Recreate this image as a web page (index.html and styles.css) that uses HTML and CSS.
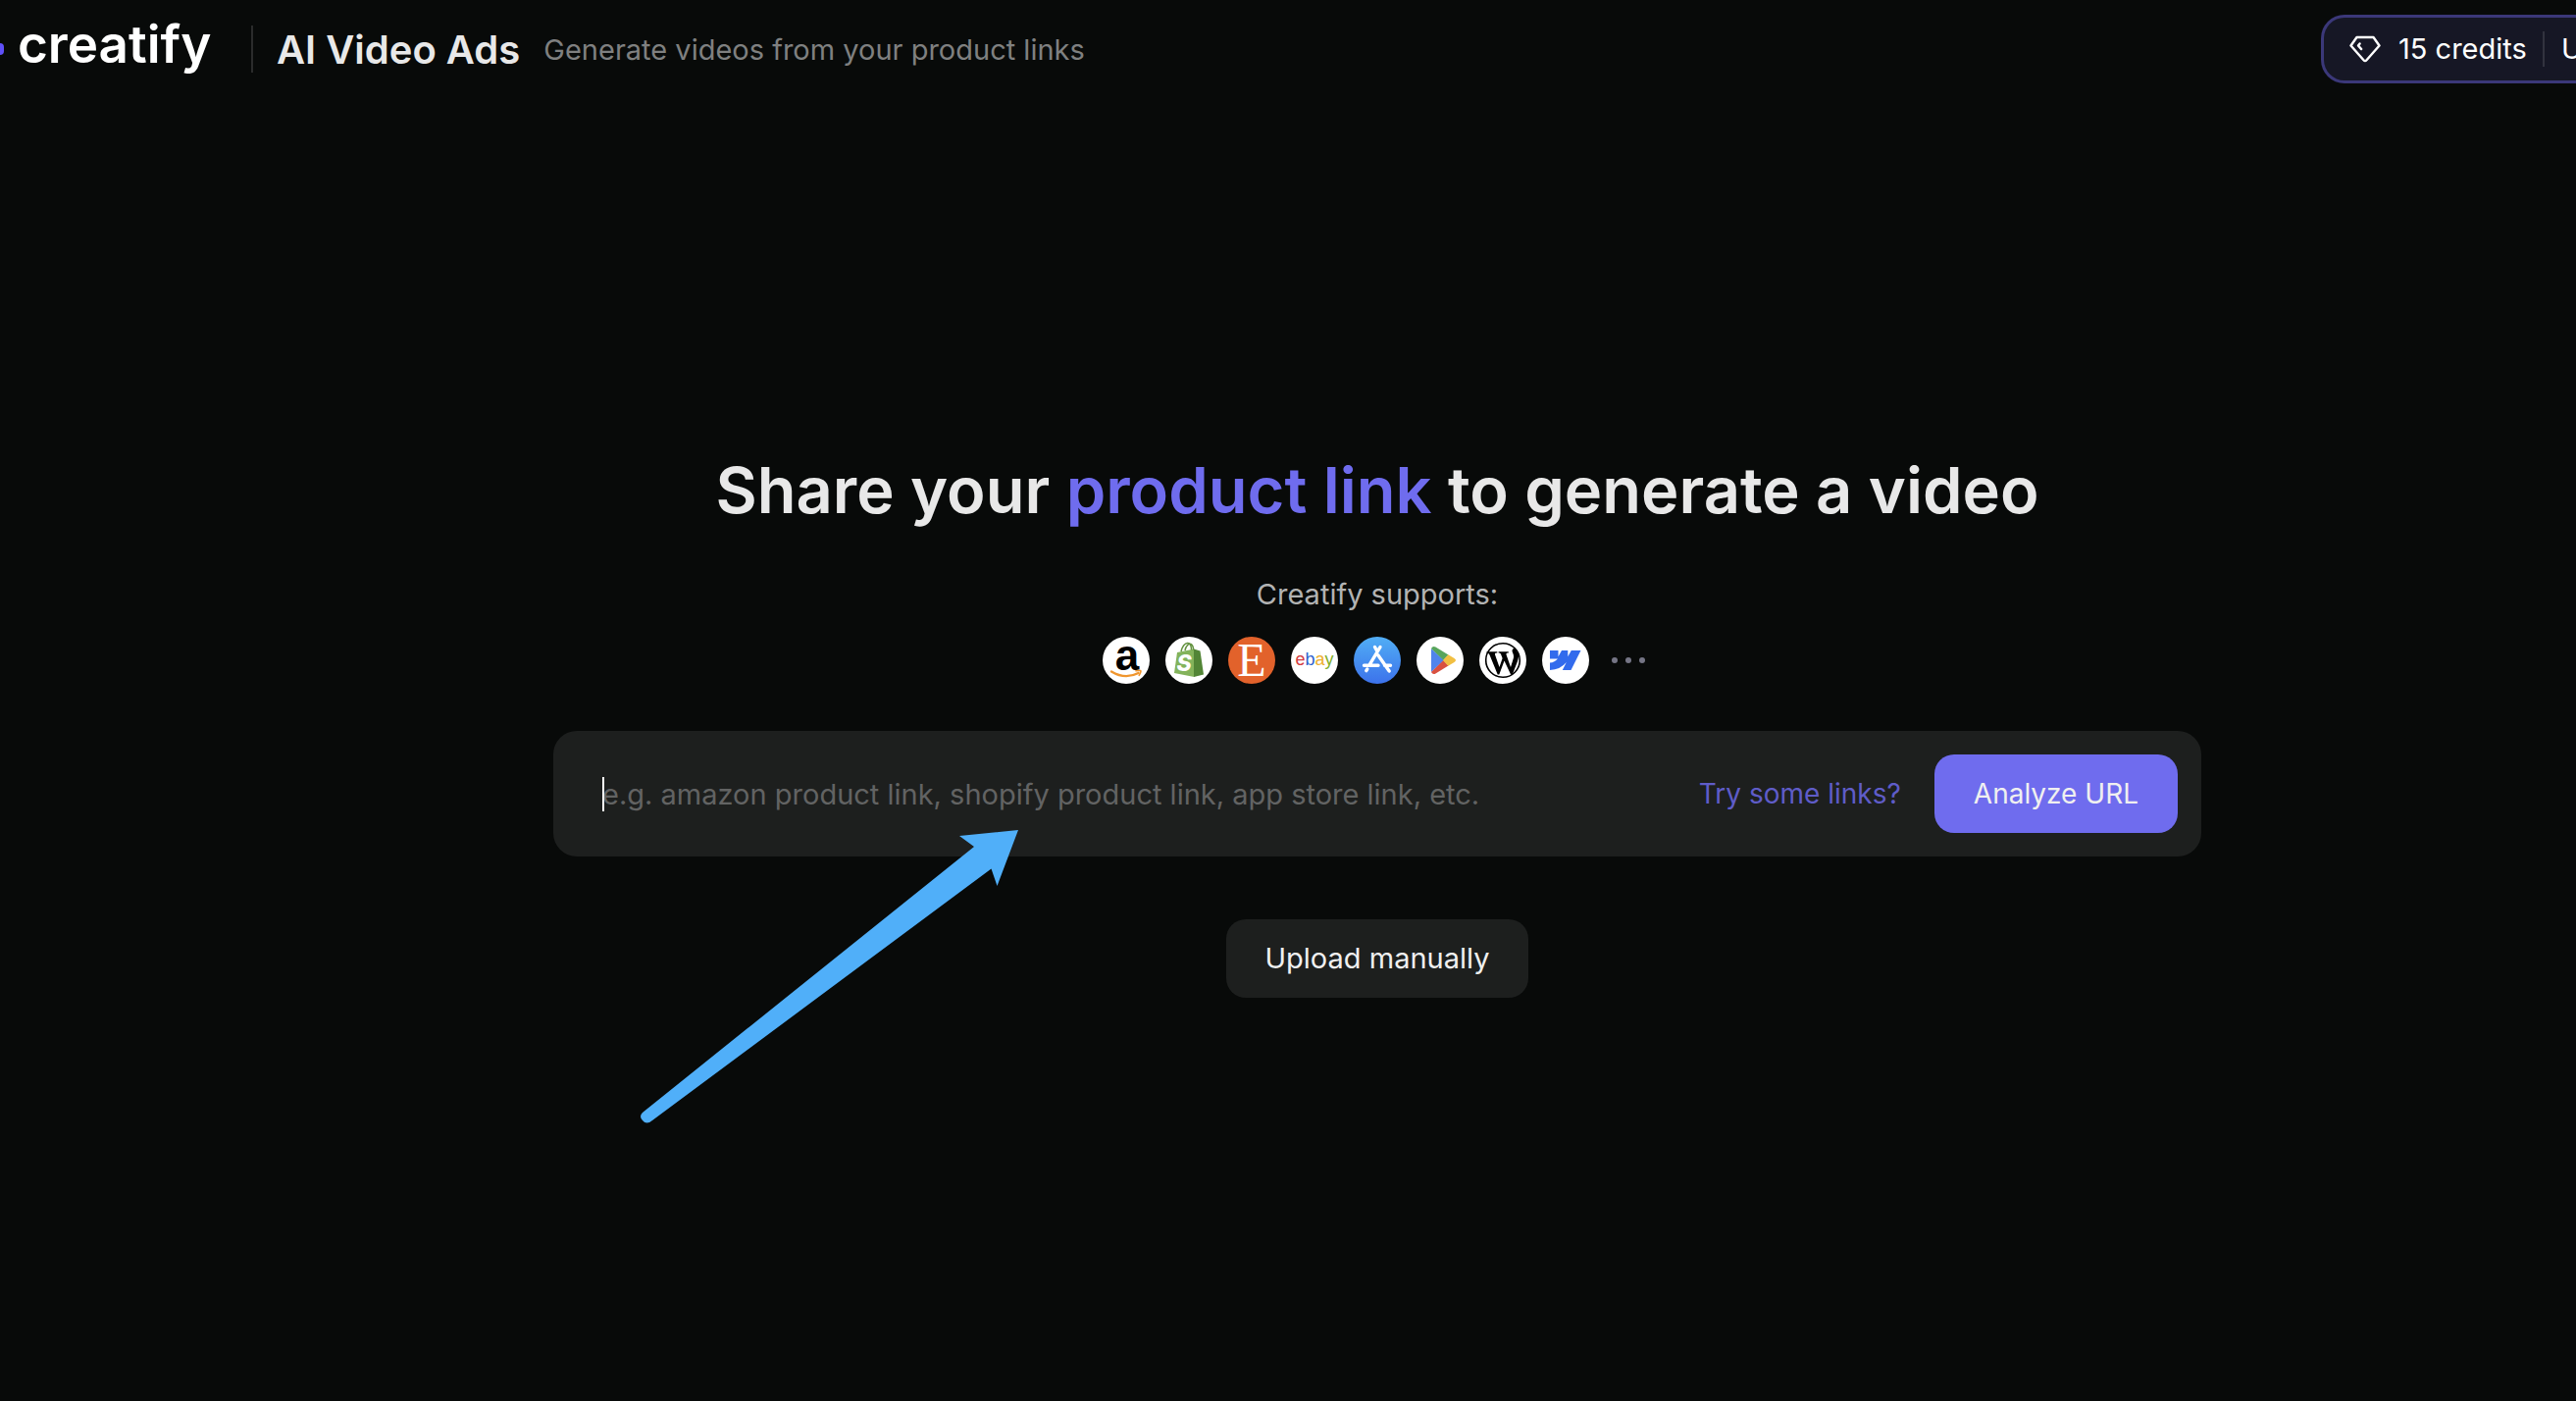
FILE: index.html
```html
<!DOCTYPE html>
<html lang="en">
<head>
<meta charset="utf-8">
<meta name="viewport" content="width=device-width, initial-scale=1">
<title>Creatify – AI Video Ads</title>
<link rel="stylesheet" href="styles.css">
</head>
<body>
<header class="topbar">
  <div class="brand">
    <span class="brand-dot"></span>
    <span class="brand-name">creatify</span>
  </div>
  <span class="divider"></span>
  <h2 class="page-name">AI Video Ads</h2>
  <p class="page-note">Generate videos from your product links</p>
  <div class="credits">
    <svg class="gem" viewBox="0 0 32 28" fill="none" stroke="#fff" stroke-width="2.4" stroke-linejoin="round" stroke-linecap="round"><path d="M7.500 2h17L30.500 10.500 17.500 25.200q-1.500 1.600-3 0L1.500 10.500z"/><path d="M10.600 8.400L9 10.500l3.200 3.600"/></svg>
    <span class="credits-count">15 credits</span>
    <span class="credits-divider"></span>
    <span class="credits-action">U</span>
  </div>
</header>

<main class="main">
  <h1 class="title">Share your <span class="accent">product link</span> to generate a video</h1>
  <p class="supports">Creatify supports:</p>
  <ul class="stores">
    <li><svg viewBox="0 0 48 48"><circle cx="24" cy="24" r="24" fill="#fff"/><text x="25" y="34" text-anchor="middle" class="mark-a">a</text><path d="M9 35.500q14 8.500 27.500 1.500" fill="none" stroke="#f0962e" stroke-width="2.400" stroke-linecap="round"/><path d="M34 34.800q5-1 5 .2t-1.800 4.400" fill="none" stroke="#f0962e" stroke-width="1.600" stroke-linecap="round"/></svg></li>
    <li><svg viewBox="0 0 48 48"><circle cx="24" cy="24" r="24" fill="#fff"/><path d="M12 16l17.500-3.500V41L9 37z" fill="#83b35b"/><path d="M29 12.600l6.500 1.800L39 38.500 29 41z" fill="#528536"/><path d="M16 15c1-5 4-9 7-8.500s3.500 4 3.500 7M20 14c1-5 4-7.500 6-6.500s2.500 3 2.500 6" fill="none" stroke="#63923f" stroke-width="1.500"/><text x="19" y="35" text-anchor="middle" class="mark-s">S</text></svg></li>
    <li><svg viewBox="0 0 48 48"><circle cx="24" cy="24" r="24" fill="#e2622b"/><text x="24" y="40" text-anchor="middle" class="mark-e">E</text></svg></li>
    <li><svg viewBox="0 0 48 48"><circle cx="24" cy="24" r="24" fill="#fff"/><text x="24" y="29" text-anchor="middle" class="mark-ebay"><tspan fill="#d43b3e">e</tspan><tspan fill="#3263cf">b</tspan><tspan fill="#eeb02f">a</tspan><tspan fill="#83ae28">y</tspan></text></svg></li>
    <li><svg viewBox="0 0 48 48"><defs><linearGradient id="sky" x2="0" y2="1"><stop stop-color="#51aef5"/><stop offset="1" stop-color="#3c72eb"/></linearGradient></defs><circle cx="24" cy="24" r="24" fill="url(#sky)"/><path d="M21.500 10.500L24 14.800M27 10.500L15.800 29.200M10.500 29.200h14.500M24.800 18.800L36.200 35M31.500 29.200h6M13.800 33L12.800 34.600" fill="none" stroke="#fff" stroke-width="3.400" stroke-linecap="round"/></svg></li>
    <li><svg viewBox="0 0 48 48"><circle cx="24" cy="24" r="24" fill="#fff"/><path d="M15 12v24l13-12z" fill="#5084ec"/><path d="M15 12q1.500-3 4.500-1.500l13 8L27.500 24z" fill="#58a55c"/><path d="M15 36q1.500 3 4.500 1.500l13-8L27.500 24z" fill="#d95140"/><path d="M32.300 18.300l6.200 3.700q3 2 0 4l-6.200 3.700L27 24z" fill="#f1bf42"/></svg></li>
    <li><svg viewBox="0 0 48 48"><circle cx="24" cy="24" r="24" fill="#fff"/><circle cx="24" cy="24" r="17.300" fill="none" stroke="#000" stroke-width="1.600"/><path d="M7.500 15.200h10.800v1.200c-2 .1-2.700.5-2.200 2L20.500 31l3.100-9-1.500-4c-.5-1.200-.9-1.500-2.500-1.600v-1.200h10.200v1.200c-2 .1-2.700.5-2.200 2L32 31l2.800-9c.9-3.300-.8-5-1.200-7-.4-2 1-3.300 2.700-3.300l3.600 6c.5 2.800-.3 5.300-1.200 8L33.800 38.500h-1.700L25.500 24.500 20.300 38.500h-1.600L10.500 18.400q-.7-1.800-3-2z" fill="#000"/></svg></li>
    <li><svg viewBox="0 0 48 48"><circle cx="24" cy="24" r="24" fill="#fff"/><path d="M39.500 14L29.500 34H20.800l4-8q-6 7.500-16.800 8v-7.400q5-.5 8-4.100H8V14h8.500v6.200L20 14h6.300v6.200L29.800 14z" fill="#326bed"/></svg></li>
    <li class="more"><svg viewBox="0 0 48 48" fill="#757585"><circle cx="10" cy="24" r="3"/><circle cx="24" cy="24" r="3"/><circle cx="38" cy="24" r="3"/></svg></li>
  </ul>
  <form class="link-form">
    <span class="caret"></span>
    <input class="link-input" type="text" aria-label="Product link" placeholder="e.g. amazon product link, shopify product link, app store link, etc.">
    <a class="try-links" href="#">Try some links?</a>
    <button class="btn btn-primary" type="button">Analyze URL</button>
    <svg class="arrow" viewBox="0 0 386 300"><path d="M386 1L326 7 341 18 3 289Q-1 293 3 297 7 302 13 297L358.500 40.500 364.500 58z" fill="#50aff9"/></svg>
  </form>
  <button class="btn btn-plain" type="button">Upload manually</button>
</main>
</body>
</html>
```
FILE: styles.css
```css
* { box-sizing: border-box; }

body {
  margin: 0;
  min-height: 100vh;
  overflow-x: hidden;
  background: #080a09;
  color: #e8e8e8;
  font-family: Inter, "Liberation Sans", sans-serif;
  font-size: 29px;
  line-height: 40px;
}

h1, h2, p, ul { margin: 0; padding: 0; }

/* Top bar */
.topbar {
  display: flex;
  align-items: center;
  height: 100px;
  white-space: nowrap;
}

.brand {
  display: flex;
  align-items: center;
  gap: 14px;
  width: 256px;
}

.brand-dot {
  width: 4px;
  height: 12px;
  border-radius: 0 6px 6px 0;
  background: #5f50f8;
}

.brand-name {
  color: #fff;
  font-size: 53px;
  font-weight: 600;
  line-height: 56px;
  padding-bottom: 10px;
}

.divider {
  width: 2px;
  height: 48px;
  background: #2b2c2c;
}

.page-name {
  margin-left: 24px;
  padding-top: 2px;
  font-size: 40px;
  font-weight: 600;
  line-height: 48px;
}

.page-note {
  margin-left: 24px;
  padding-top: 2px;
  color: #7f8080;
}

.credits {
  display: flex;
  align-items: center;
  width: 260px;
  height: 70px;
  margin-left: auto;
  padding-left: 26px;
  border: 3px solid #3b3879;
  border-right: 0;
  border-radius: 24px 0 0 24px;
  background: #161725;
  color: #fff;
}

.gem { width: 32px; height: 28px; }
.credits-count { width: 147px; margin-left: 18px; }

.credits-divider {
  flex: none;
  width: 2px;
  height: 36px;
  margin-right: 17px;
  background: #32333f;
}

.credits-action { flex: 1; min-width: 0; overflow: hidden; }

/* Main column */
.main {
  display: flex;
  flex-direction: column;
  align-items: center;
  padding: 360px 0 64px 182px;
}

.title {
  font-size: 65px;
  font-weight: 600;
  line-height: 80px;
}

.accent { color: #6f6cee; }

.supports {
  margin-top: 46px;
  color: #b2b3b3;
}

.stores {
  display: flex;
  gap: 16px;
  margin-top: 23px;
  list-style: none;
}

.stores svg {
  display: block;
  width: 48px;
  height: 48px;
}

.mark-a { font: bold 44px "Liberation Sans", sans-serif; }
.mark-s { font: italic 800 23px Inter, sans-serif; fill: #fff; }
.mark-e { font: 48px "Liberation Serif", serif; fill: #fff; }
.mark-ebay { font: 18px "Liberation Sans", sans-serif; stroke-width: 0; }

/* Link form */
.link-form {
  position: relative;
  display: flex;
  align-items: center;
  width: 72%;
  max-width: 1680px;
  height: 128px;
  margin-top: 48px;
  padding: 0 24px 0 50px;
  border-radius: 24px;
  background: #1d1f1e;
}

.caret {
  position: absolute;
  left: 50px;
  top: 47px;
  width: 2px;
  height: 35px;
  background: #fff;
}

.link-input {
  flex: 1;
  min-width: 0;
  padding: 2px 0 0;
  border: 0;
  outline: 0;
  background: none;
  color: #e8e8e8;
  font: inherit;
}

.link-input::placeholder { color: #626363; opacity: 1; }

.try-links {
  margin-right: 34px;
  color: #5f5cc8;
  font-size: 28px;
  text-decoration: none;
}

.btn {
  height: 80px;
  padding: 0 40px;
  border: 0;
  border-radius: 20px;
  color: #f0f0f0;
  font: inherit;
}

.btn-primary {
  background: #6f6cee;
  font-size: 28px;
}

.btn-plain {
  margin-top: 64px;
  background: #1d1f1e;
}

.arrow {
  position: absolute;
  left: 88px;
  top: 100px;
  width: 386px;
  height: 300px;
  pointer-events: none;
}
```
